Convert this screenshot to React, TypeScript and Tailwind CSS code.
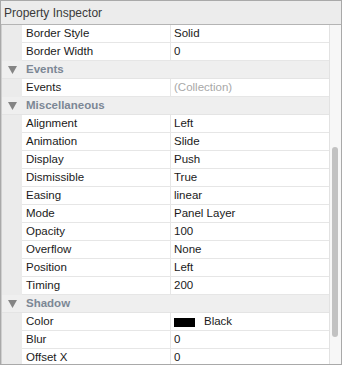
import React from "react";

type Row =
  | { kind: "group"; label: string }
  | { kind: "prop"; name: string; value: string; muted?: boolean; swatch?: boolean };

const rows: Row[] = [
  { kind: "prop", name: "Border Style", value: "Solid" },
  { kind: "prop", name: "Border Width", value: "0" },
  { kind: "group", label: "Events" },
  { kind: "prop", name: "Events", value: "(Collection)", muted: true },
  { kind: "group", label: "Miscellaneous" },
  { kind: "prop", name: "Alignment", value: "Left" },
  { kind: "prop", name: "Animation", value: "Slide" },
  { kind: "prop", name: "Display", value: "Push" },
  { kind: "prop", name: "Dismissible", value: "True" },
  { kind: "prop", name: "Easing", value: "linear" },
  { kind: "prop", name: "Mode", value: "Panel Layer" },
  { kind: "prop", name: "Opacity", value: "100" },
  { kind: "prop", name: "Overflow", value: "None" },
  { kind: "prop", name: "Position", value: "Left" },
  { kind: "prop", name: "Timing", value: "200" },
  { kind: "group", label: "Shadow" },
  { kind: "prop", name: "Color", value: "Black", swatch: true },
  { kind: "prop", name: "Blur", value: "0" },
  { kind: "prop", name: "Offset X", value: "0" },
];

function Triangle() {
  return (
    <svg width="9" height="8" viewBox="0 0 9 8" className="block">
      <path d="M0 0 L9 0 L4.5 8 Z" fill="#858585" />
    </svg>
  );
}

export default function App() {
  return (
    <div
      className="w-[342px] h-[365px] border border-[#a9a9a9] bg-[#ececec] flex flex-col overflow-hidden text-[11.5px] text-[#1a1a1a]"
      style={{ fontFamily: '"Liberation Sans", Arial, sans-serif' }}
    >
      <div className="h-[24px] shrink-0 border-b border-[#b4b4b4] bg-[#ececec] flex items-center pl-[3px] pt-[1px] text-[12px] text-[#3a3a3a]">
        Property Inspector
      </div>
      <div className="flex-1 flex min-h-0">
        <div className="flex-1 flex flex-col overflow-hidden border-l border-[#cfcfcf]">
          {rows.map((r, i) =>
            r.kind === "group" ? (
              <div key={i} className="h-[18px] shrink-0 flex items-center bg-[#efefef] border-b border-[#e4e4e4] pt-[1px]">
                <div className="w-[20px] shrink-0 flex justify-center pl-[1px]">
                  <Triangle />
                </div>
                <div className="pl-[4px] font-bold text-[#7c8795]">{r.label}</div>
              </div>
            ) : (
              <div key={i} className="h-[18px] shrink-0 flex">
                <div className="w-[20px] shrink-0 bg-[#ebebeb]" />
                <div className="flex-1 flex bg-white border-b border-[#e6e6e6]">
                  <div className="w-[149px] shrink-0 flex items-center pl-[4px] pt-[1px] border-r border-[#e6e6e6]">
                    {r.name}
                  </div>
                  <div className={`flex-1 flex items-center pl-[3px] pt-[1px] ${r.muted ? "text-[#a8a8a8]" : ""}`}>
                    {r.swatch ? (
                      <>
                        <span className="inline-block w-[21px] h-[9px] bg-black mr-[9px]" />
                        {r.value}
                      </>
                    ) : (
                      r.value
                    )}
                  </div>
                </div>
              </div>
            )
          )}
        </div>
        <div className="w-[12px] shrink-0 bg-[#f7f7f7] border-l border-[#e2e2e2] relative">
          <div className="absolute left-[2px] top-[122px] w-[6px] h-[190px] rounded-full bg-[#c2c2c2]" />
        </div>
      </div>
    </div>
  );
}
